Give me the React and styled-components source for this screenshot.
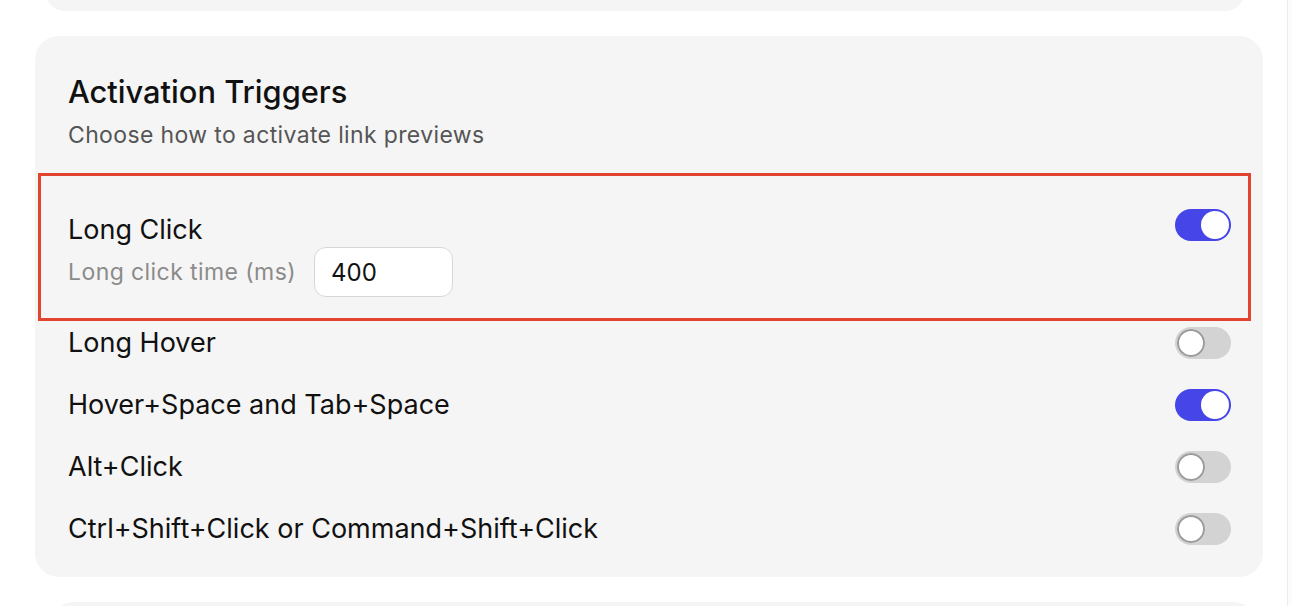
import React, { useState } from "react";
import styled, { createGlobalStyle } from "styled-components";

const Global = createGlobalStyle`
  html, body { margin: 0; padding: 0; background: #ffffff; }
  body { font-family: Inter, "Noto Sans", sans-serif; color: #111; overflow: hidden; height: 606px; }
  * { box-sizing: border-box; }
`;

const Page = styled.div`
  display: grid;
  grid-template-columns: 1287px 1fr;
  height: 606px;
  overflow: hidden;
`;

const Main = styled.div`
  display: flex;
  flex-direction: column;
  gap: 25px;
`;

const Side = styled.div`
  border-left: 1px solid #ececec;
  background: #fcfcfc;
`;

const Card = styled.section`
  background: #f5f5f5;
  border-radius: 24px;
  margin-left: ${(p) => p.$left}px;
  margin-right: ${(p) => p.$right}px;
  flex-shrink: 0;
`;

const StubCard = styled(Card)`
  height: ${(p) => p.$h}px;
  margin-top: ${(p) => p.$mt || 0}px;
`;

const SettingsCard = styled(Card)`
  padding: 38px 32px 26px 33px;
`;

const Title = styled.h2`
  margin: 0;
  font-size: 30.8px;
  line-height: 36px;
  font-weight: 500;
  color: #111;
`;

const Subtitle = styled.p`
  margin: 10px 0 23px;
  font-size: 23px;
  line-height: 30px;
  letter-spacing: 0.36px;
  color: #555;
`;

const Highlight = styled.div`
  border: 3px solid #e2442f;
  margin: 0 -20px 0 -30px;
  padding: 37px 17px 21px 27px;
  display: flex;
  align-items: flex-start;
  justify-content: space-between;
`;

const Stack = styled.div`
  display: flex;
  flex-direction: column;
`;

const Label = styled.span`
  font-size: 27px;
  line-height: 34px;
  color: #111;
`;

const SubRow = styled.div`
  display: flex;
  align-items: center;
  gap: 18px;
`;

const Hint = styled.span`
  font-size: 23px;
  letter-spacing: 0.42px;
  color: #8b8b8b;
`;

const NumberInput = styled.input`
  width: 139px;
  height: 50px;
  border: 1.5px solid #d7d7d7;
  border-radius: 12px;
  background: #fff;
  font-family: inherit;
  font-size: 24px;
  color: #111;
  padding: 0 0 0 16px;
  outline: none;
`;

const Rows = styled.div`
  display: flex;
  flex-direction: column;
  gap: 18px;
`;

const Row = styled.div`
  height: 44px;
  display: flex;
  align-items: center;
  justify-content: space-between;
`;

const Track = styled.button`
  width: 56px;
  height: 32px;
  border-radius: 16px;
  border: none;
  padding: 2px;
  cursor: pointer;
  display: flex;
  justify-content: ${(p) => (p.$on ? "flex-end" : "flex-start")};
  background: ${(p) => (p.$on ? "#4545e8" : "#d3d3d3")};
  margin-top: ${(p) => p.$mt || 0}px;
  flex-shrink: 0;
`;

const Knob = styled.span`
  width: 28px;
  height: 28px;
  border-radius: 50%;
  background: #fff;
  box-shadow: ${(p) => (p.$on ? "none" : "inset 0 0 0 2px #9c9c9c")};
`;

function Toggle({ on, onChange, mt }) {
  return (
    <Track $on={on} $mt={mt} onClick={onChange} aria-pressed={on}>
      <Knob $on={on} />
    </Track>
  );
}

export default function App() {
  const [state, setState] = useState({
    longClick: true,
    longHover: false,
    hoverSpace: true,
    alt: false,
    ctrl: false,
  });
  const [ms, setMs] = useState("400");
  const flip = (k) => () => setState((s) => ({ ...s, [k]: !s[k] }));

  const rows = [
    ["longHover", "Long Hover"],
    ["hoverSpace", "Hover+Space and Tab+Space"],
    ["alt", "Alt+Click"],
    ["ctrl", "Ctrl+Shift+Click or Command+Shift+Click"],
  ];

  return (
    <>
      <Global />
      <Page>
        <Main>
          <StubCard $left={45} $right={42} $h={40} $mt={-29} />
          <SettingsCard $left={35} $right={24}>
            <Title>Activation Triggers</Title>
            <Subtitle>Choose how to activate link previews</Subtitle>
            <Highlight>
              <Stack>
                <Label>Long Click</Label>
                <SubRow>
                  <Hint>Long click time (ms)</Hint>
                  <NumberInput value={ms} onChange={(e) => setMs(e.target.value)} />
                </SubRow>
              </Stack>
              <Toggle on={state.longClick} onChange={flip("longClick")} mt={-4} />
            </Highlight>
            <Rows>
              {rows.map(([k, text]) => (
                <Row key={k}>
                  <Label>{text}</Label>
                  <Toggle on={state[k]} onChange={flip(k)} />
                </Row>
              ))}
            </Rows>
          </SettingsCard>
          <StubCard $left={50} $right={30} $h={60} />
        </Main>
        <Side />
      </Page>
    </>
  );
}
